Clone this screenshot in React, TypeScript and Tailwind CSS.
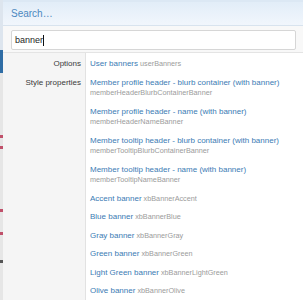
type Result = { title: string; sub: string; stacked?: boolean };

const groups: { label: string; items: Result[] }[] = [
  { label: 'Options', items: [{ title: 'User banners', sub: 'userBanners' }] },
  {
    label: 'Style properties',
    items: [
      { title: 'Member profile header - blurb container (with banner)', sub: 'memberHeaderBlurbContainerBanner', stacked: true },
      { title: 'Member profile header - name (with banner)', sub: 'memberHeaderNameBanner', stacked: true },
      { title: 'Member tooltip header - blurb container (with banner)', sub: 'memberTooltipBlurbContainerBanner', stacked: true },
      { title: 'Member tooltip header - name (with banner)', sub: 'memberTooltipNameBanner', stacked: true },
      { title: 'Accent banner', sub: 'xbBannerAccent' },
      { title: 'Blue banner', sub: 'xbBannerBlue' },
      { title: 'Gray banner', sub: 'xbBannerGray' },
      { title: 'Green banner', sub: 'xbBannerGreen' },
      { title: 'Light Green banner', sub: 'xbBannerLightGreen' },
      { title: 'Olive banner', sub: 'xbBannerOlive' },
    ],
  },
];

export default function App() {
  return (
    <div className="w-[303px] h-[300px] flex overflow-hidden bg-white font-['Liberation_Sans',Arial,sans-serif]">
      {/* page behind the overlay */}
      <div className="w-[3px] flex flex-col shrink-0">
        <div className="h-[50px] bg-[#dde5ee]" />
        <div className="h-[23px] bg-[#2f6da5]" />
        <div className="flex-1 bg-[#e6e6e6] flex flex-col">
          <div className="h-[62px]" />
          <div className="h-[3px] bg-[#c0506a]" />
          <div className="h-[8px]" />
          <div className="h-[3px] bg-[#c0506a]" />
          <div className="h-[60px]" />
          <div className="h-[3px] bg-[#c0506a]" />
          <div className="h-[20px]" />
          <div className="h-[3px] bg-[#c0506a]" />
          <div className="h-[25px]" />
          <div className="h-[3px] bg-[#555]" />
        </div>
      </div>

      <div className="flex-1 flex flex-col min-w-0">
        <div className="h-[26px] shrink-0 flex items-center pl-[8px] bg-gradient-to-b from-[#e2edf8] to-[#f1f6fc] border-t-2 border-t-[#dce8f4] border-b border-b-[#d8e3ee]">
          <span className="text-[10px] text-[#4c88c0]">Search…</span>
        </div>

        <div className="shrink-0 bg-[#f8f8f8] pl-[8px] pr-[7px] pt-[4px] pb-[2px] border-b border-[#e4e4e4]">
          <div className="h-[20px] bg-white border border-[#d6d6d6] rounded-[2px] flex items-center pl-[3px] text-[9px] leading-[11px]">
            <span className="text-[#1e1e1e]">banner</span>
            <span className="w-px h-[11px] bg-[#111]" />
          </div>
        </div>

        <div className="flex-1 flex flex-col">
          {groups.map((g, gi) => (
            <div key={g.label} className={`flex ${gi === groups.length - 1 ? 'flex-1' : ''}`}>
              <div
                className={`w-[83px] shrink-0 bg-[#f5f5f5] border-r border-[#e2e2e2] text-right pr-[4px] text-[8px] leading-[10.5px] text-[#3a3a3a] ${gi === 0 ? 'pt-[6px]' : 'pt-[4px]'}`}
              >
                {g.label}
              </div>
              <ul className={`flex-1 pl-[4px] text-[8px] leading-[10.5px] ${gi === 0 ? 'pt-[2px]' : ''}`}>
                {g.items.map((it) => (
                  <li key={it.sub} className="py-[4px] whitespace-nowrap">
                    <span className="text-[#3b7bb4]">{it.title}</span>
                    {it.stacked ? (
                      <div className="text-[7.25px] text-[#9b9b9b]">{it.sub}</div>
                    ) : (
                      <span className="text-[7.25px] text-[#9b9b9b]"> {it.sub}</span>
                    )}
                  </li>
                ))}
              </ul>
            </div>
          ))}
        </div>
      </div>
    </div>
  );
}
